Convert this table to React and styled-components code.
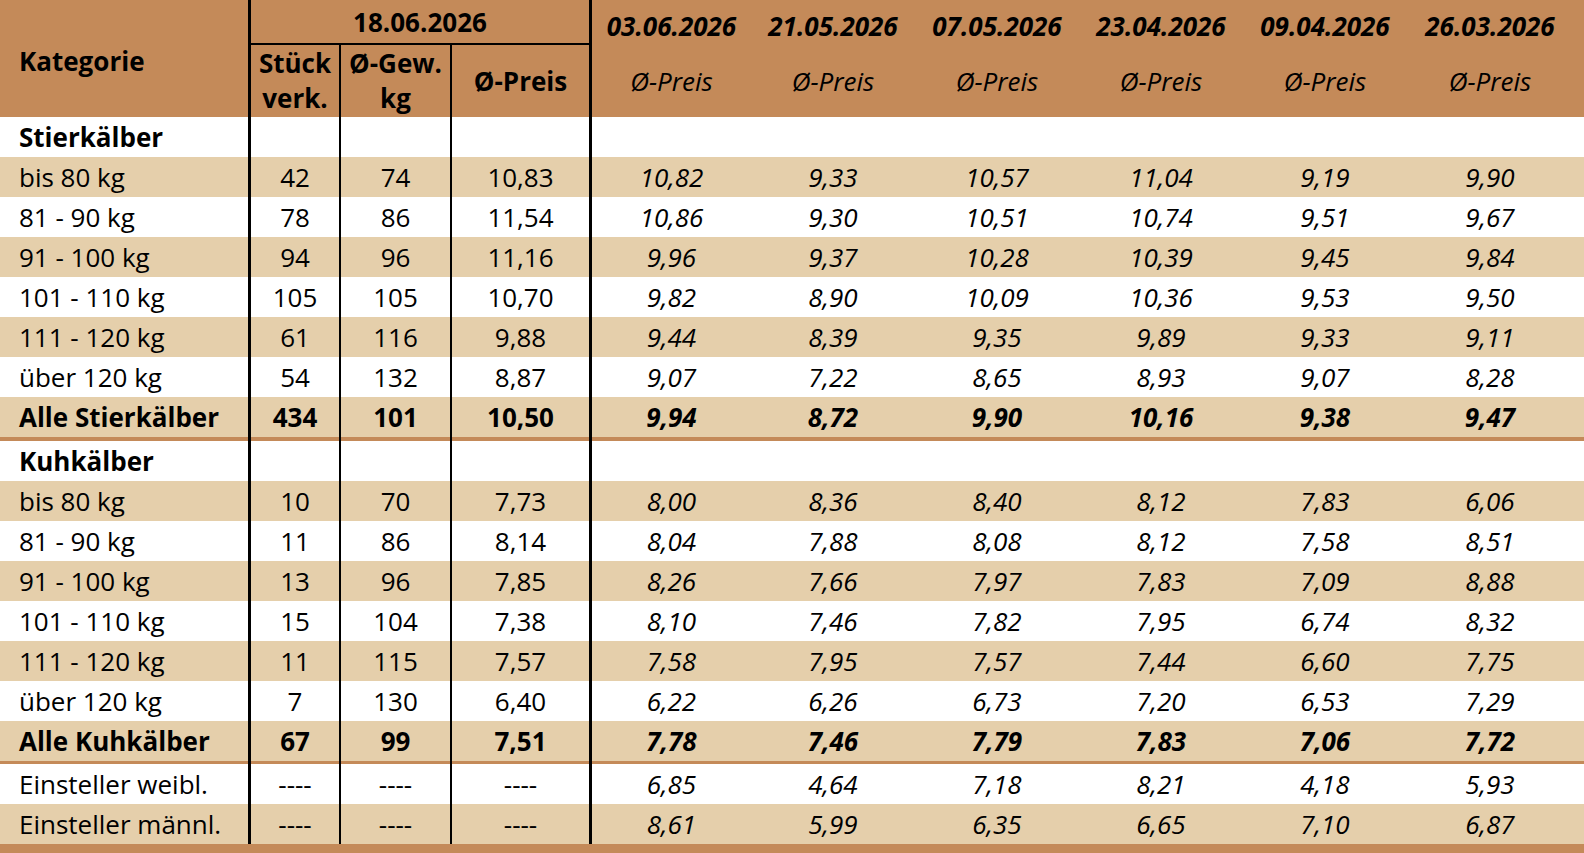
import styled, { createGlobalStyle } from "styled-components";

const BROWN = "#c48a59";
const TAN = "#e5cfab";

const GlobalStyle = createGlobalStyle`
  body {
    margin: 0;
    background: #fff;
    font-family: "Open Sans", "DejaVu Sans", sans-serif;
    color: #000;
  }
`;

const dates = ["03.06.2026", "21.05.2026", "07.05.2026", "23.04.2026", "09.04.2026", "26.03.2026"];

const stier = [
  ["bis 80 kg", "42", "74", "10,83", ["10,82", "9,33", "10,57", "11,04", "9,19", "9,90"]],
  ["81 - 90 kg", "78", "86", "11,54", ["10,86", "9,30", "10,51", "10,74", "9,51", "9,67"]],
  ["91 - 100 kg", "94", "96", "11,16", ["9,96", "9,37", "10,28", "10,39", "9,45", "9,84"]],
  ["101 - 110 kg", "105", "105", "10,70", ["9,82", "8,90", "10,09", "10,36", "9,53", "9,50"]],
  ["111 - 120 kg", "61", "116", "9,88", ["9,44", "8,39", "9,35", "9,89", "9,33", "9,11"]],
  ["über 120 kg", "54", "132", "8,87", ["9,07", "7,22", "8,65", "8,93", "9,07", "8,28"]],
];
const stierTotal = ["Alle Stierkälber", "434", "101", "10,50", ["9,94", "8,72", "9,90", "10,16", "9,38", "9,47"]];

const kuh = [
  ["bis 80 kg", "10", "70", "7,73", ["8,00", "8,36", "8,40", "8,12", "7,83", "6,06"]],
  ["81 - 90 kg", "11", "86", "8,14", ["8,04", "7,88", "8,08", "8,12", "7,58", "8,51"]],
  ["91 - 100 kg", "13", "96", "7,85", ["8,26", "7,66", "7,97", "7,83", "7,09", "8,88"]],
  ["101 - 110 kg", "15", "104", "7,38", ["8,10", "7,46", "7,82", "7,95", "6,74", "8,32"]],
  ["111 - 120 kg", "11", "115", "7,57", ["7,58", "7,95", "7,57", "7,44", "6,60", "7,75"]],
  ["über 120 kg", "7", "130", "6,40", ["6,22", "6,26", "6,73", "7,20", "6,53", "7,29"]],
];
const kuhTotal = ["Alle Kuhkälber", "67", "99", "7,51", ["7,78", "7,46", "7,79", "7,83", "7,06", "7,72"]];

const einsteller = [
  ["Einsteller weibl.", "----", "----", "----", ["6,85", "4,64", "7,18", "8,21", "4,18", "5,93"]],
  ["Einsteller männl.", "----", "----", "----", ["8,61", "5,99", "6,35", "6,65", "7,10", "6,87"]],
];

const edge = (line) =>
  line === "thick" ? "border-left: 3px solid #000;" : line === "thin" ? "border-left: 2px solid #000;" : "";

const Sheet = styled.div`
  width: 1584px;
  font-size: 26px;
`;

const Head = styled.div`
  display: flex;
  height: 117px;
  background: ${BROWN};
`;

const KatHead = styled.div`
  width: 248px;
  flex: none;
  box-sizing: border-box;
  padding: 4px 0 0 19px;
  display: flex;
  align-items: center;
  font-weight: 700;
`;

const Group = styled.div`
  width: 341px;
  flex: none;
  box-sizing: border-box;
  border-left: 3px solid #000;
  display: flex;
  flex-direction: column;
`;

const GroupTitle = styled.div`
  height: 45px;
  box-sizing: border-box;
  border-bottom: 2px solid #000;
  display: flex;
  align-items: center;
  justify-content: center;
  font-weight: 700;
`;

const GroupCols = styled.div`
  flex: 1;
  display: flex;
`;

const SubHead = styled.div`
  width: ${(p) => p.$w}px;
  flex: none;
  box-sizing: border-box;
  ${(p) => edge(p.$line)}
  display: flex;
  align-items: center;
  justify-content: center;
  text-align: center;
  font-weight: 700;
  line-height: 35px;
`;

const DateHead = styled.div`
  box-sizing: border-box;
  ${(p) => (p.$last ? "flex: 1; padding-right: 11px;" : `width: ${p.$w}px; flex: none;`)}
  ${(p) => edge(p.$line)}
  display: flex;
  flex-direction: column;
`;

const DateLabel = styled.div`
  height: 45px;
  box-sizing: border-box;
  padding-top: 6px;
  display: flex;
  align-items: center;
  justify-content: center;
  font-weight: 700;
  font-style: italic;
`;

const DateSub = styled.div`
  flex: 1;
  display: flex;
  align-items: center;
  justify-content: center;
  font-style: italic;
`;

const Row = styled.div`
  display: flex;
  height: ${(p) => p.$h || 40}px;
  background: ${(p) => (p.$tone === "tan" ? TAN : p.$tone === "brown" ? BROWN : "#fff")};
  font-weight: ${(p) => (p.$bold ? 700 : 400)};
`;

const Label = styled.div`
  width: 248px;
  flex: none;
  box-sizing: border-box;
  padding-left: 19px;
  display: flex;
  align-items: center;
  white-space: nowrap;
`;

const Cell = styled.div`
  box-sizing: border-box;
  ${(p) => (p.$last ? "flex: 1; padding-right: 11px;" : `width: ${p.$w}px; flex: none;`)}
  ${(p) => edge(p.$line)}
  display: flex;
  align-items: center;
  justify-content: center;
  font-style: ${(p) => (p.$italic ? "italic" : "normal")};
`;

const Foot = styled.div`
  height: 9px;
  background: ${BROWN};
`;

const current = [
  { w: 91, line: "thick" },
  { w: 111, line: "thin" },
  { w: 139, line: "thin" },
];
const dateCol = (i) => ({ w: i === 0 ? 162 : 164, line: i === 0 ? "thick" : null, last: i === 5 });

const Cells = ({ values = ["", "", ""], history = ["", "", "", "", "", ""] }) => (
  <>
    {current.map((c, i) => (
      <Cell key={"c" + i} $w={c.w} $line={c.line}>
        {values[i]}
      </Cell>
    ))}
    {history.map((v, i) => {
      const d = dateCol(i);
      return (
        <Cell key={"d" + i} $w={d.w} $line={d.line} $last={d.last} $italic>
          {v}
        </Cell>
      );
    })}
  </>
);

const DataRow = ({ row, tone, bold }) => (
  <Row $tone={tone} $bold={bold}>
    <Label>{row[0]}</Label>
    <Cells values={[row[1], row[2], row[3]]} history={row[4]} />
  </Row>
);

const Section = ({ title, rows, total }) => (
  <>
    <Row $bold>
      <Label>{title}</Label>
      <Cells />
    </Row>
    {rows.map((r, i) => (
      <DataRow key={i} row={r} tone={i % 2 === 0 ? "tan" : "white"} />
    ))}
    <DataRow row={total} tone="tan" bold />
  </>
);

const Separator = ({ h }) => (
  <Row $tone="brown" $h={h}>
    <Label />
    <Cells />
  </Row>
);

export default function App() {
  return (
    <Sheet>
      <GlobalStyle />
      <Head>
        <KatHead>Kategorie</KatHead>
        <Group>
          <GroupTitle>18.06.2026</GroupTitle>
          <GroupCols>
            <SubHead $w={88}>
              Stück
              <br />
              verk.
            </SubHead>
            <SubHead $w={111} $line="thin">
              Ø-Gew.
              <br />
              kg
            </SubHead>
            <SubHead $w={139} $line="thin">
              Ø-Preis
            </SubHead>
          </GroupCols>
        </Group>
        {dates.map((d, i) => {
          const c = dateCol(i);
          return (
            <DateHead key={d} $w={c.w} $line={c.line} $last={c.last}>
              <DateLabel>{d}</DateLabel>
              <DateSub>Ø-Preis</DateSub>
            </DateHead>
          );
        })}
      </Head>
      <Section title="Stierkälber" rows={stier} total={stierTotal} />
      <Separator h={4} />
      <Section title="Kuhkälber" rows={kuh} total={kuhTotal} />
      <Separator h={3} />
      {einsteller.map((r, i) => (
        <DataRow key={i} row={r} tone={i === 0 ? "white" : "tan"} />
      ))}
      <Foot />
    </Sheet>
  );
}
